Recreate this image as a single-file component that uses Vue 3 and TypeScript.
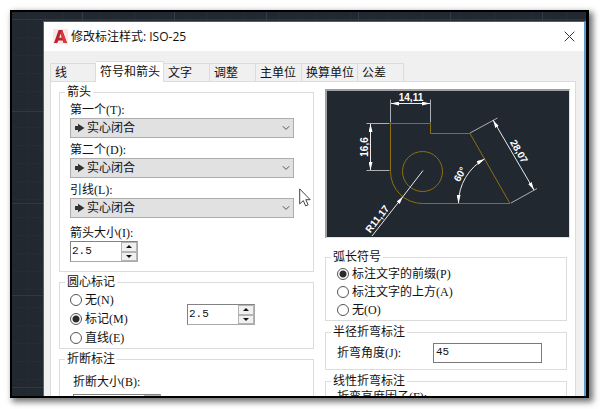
<script setup lang="ts">
import { ref } from 'vue'

interface Choice {
  id: string
  text: string
  key: string
}

const tabs = ['线', '符号和箭头', '文字', '调整', '主单位', '换算单位', '公差']
const activeTab = ref(1)

const arrowFields: Choice[] = [
  { id: 'first', text: '第一个', key: '(T):' },
  { id: 'second', text: '第二个', key: '(D):' },
  { id: 'leader', text: '引线', key: '(L):' },
]
const arrowHeads = ref(['实心闭合', '实心闭合', '实心闭合'])

const centerMarks: Choice[] = [
  { id: 'none', text: '无', key: '(N)' },
  { id: 'mark', text: '标记', key: '(M)' },
  { id: 'line', text: '直线', key: '(E)' },
]
const centerMark = ref('mark')

const arcSymbols: Choice[] = [
  { id: 'before', text: '标注文字的前缀', key: '(P)' },
  { id: 'above', text: '标注文字的上方', key: '(A)' },
  { id: 'off', text: '无', key: '(O)' },
]
const arcSymbol = ref('before')

const arrowSize = ref('2.5')
const markSize = ref('2.5')
const breakSize = ref('')
const jogAngle = ref('45')
</script>

<template>
  <div class="screen">
    <div class="desktop">
      <section class="dialog">
        <header class="titlebar">
          <svg class="logo" viewBox="0 0 15 15" aria-hidden="true">
            <rect width="15" height="15" fill="#f8e9e4" />
            <path d="M1 14 5.6 1h3.6L14 14h-3.4l-1-2.6H5.4L4.2 14z" fill="#b9242c" />
            <path d="M6.2 8.8h2.6L7.6 4.6z" fill="#f8e9e4" />
            <path d="M9.2 1 14 14h-3.4L7.6 4.6z" fill="#d93a3f" />
          </svg>
          <h1>修改标注样式: ISO-25</h1>
          <button class="close" type="button" aria-label="关闭">
            <svg viewBox="0 0 11 11"><path d="M.7.7l9.6 9.6M10.3.7.7 10.3" /></svg>
          </button>
        </header>

        <div class="body">
          <nav class="tabs">
            <button
              v-for="(tab, i) in tabs"
              :key="tab"
              type="button"
              class="tab"
              :class="{ active: i === activeTab }"
              @click="activeTab = i"
            >{{ tab }}</button>
          </nav>

          <div class="page">
            <div class="column">
              <fieldset>
                <legend>箭头</legend>
                <div class="arrows">
                  <div v-for="(f, i) in arrowFields" :key="f.id" class="field">
                    <label :for="f.id">{{ f.text }}<span class="key">{{ f.key }}</span></label>
                    <div class="combo">
                      <select :id="f.id" v-model="arrowHeads[i]">
                        <option>实心闭合</option>
                      </select>
                      <svg class="head" viewBox="0 0 12 10"><path d="M1 3h3V0.8L10.5 5 4 9.2V7H1z" /></svg>
                      <svg class="chevron" viewBox="0 0 8 6"><path d="M.8 1.2 4 4.4l3.2-3.2" /></svg>
                    </div>
                  </div>
                  <div class="field size">
                    <label for="arrow-size">箭头大小<span class="key">(I):</span></label>
                    <div class="spin">
                      <input id="arrow-size" v-model="arrowSize" type="text" />
                      <div class="steps">
                        <button type="button" aria-label="+"><i class="up"></i></button>
                        <button type="button" aria-label="-"><i class="down"></i></button>
                      </div>
                    </div>
                  </div>
                </div>
              </fieldset>

              <fieldset>
                <legend>圆心标记</legend>
                <div class="marks">
                  <div class="radios">
                    <label v-for="c in centerMarks" :key="c.id" class="radio">
                      <input v-model="centerMark" type="radio" name="center" :value="c.id" />
                      <span>{{ c.text }}<span class="key">{{ c.key }}</span></span>
                    </label>
                  </div>
                  <div class="spin">
                    <input v-model="markSize" type="text" aria-label="圆心标记" />
                    <div class="steps">
                      <button type="button" aria-label="+"><i class="up"></i></button>
                      <button type="button" aria-label="-"><i class="down"></i></button>
                    </div>
                  </div>
                </div>
              </fieldset>

              <fieldset>
                <legend>折断标注</legend>
                <div class="breaks">
                  <label for="break-size">折断大小<span class="key">(B):</span></label>
                  <div class="spin wide">
                    <input id="break-size" v-model="breakSize" type="text" />
                    <div class="steps">
                      <button type="button" aria-label="+"><i class="up"></i></button>
                      <button type="button" aria-label="-"><i class="down"></i></button>
                    </div>
                  </div>
                </div>
              </fieldset>
            </div>

            <div class="column right">
              <div class="preview">
                <svg viewBox="328 91 242 146">
                  <defs>
                    <marker id="tip" viewBox="0 0 8 4" refX="8" refY="2" markerWidth="8" markerHeight="4" markerUnits="userSpaceOnUse" orient="auto-start-reverse">
                      <path d="M8 2 0 0v4z" fill="#fff" />
                    </marker>
                  </defs>
                  <g class="part">
                    <path d="M391.500 171.500v-48h40v10h39.500l40 70h-87.500a32 32 0 0 1-32-32z" />
                    <circle cx="423.500" cy="171.500" r="20" />
                  </g>
                  <g class="ext">
                    <path d="M391.500 99.500v23M431.500 99.500v23M367.500 123.500h23M367.500 170.500h23M471 133l27.500-15M512 203l26-14.500" />
                  </g>
                  <g class="dim">
                    <path d="M392 103.500h39" marker-start="url(#tip)" marker-end="url(#tip)" />
                    <path d="M371.500 124v46" marker-start="url(#tip)" marker-end="url(#tip)" />
                    <path d="M494 120l41 70" marker-start="url(#tip)" marker-end="url(#tip)" />
                    <path d="M459.500 203a51 51 0 0 1 26-44" marker-start="url(#tip)" marker-end="url(#tip)" />
                    <path d="M373 236l31-39.500" marker-end="url(#tip)" />
                    <path d="M404 196.500l20-26" />
                  </g>
                  <g class="value">
                    <text x="412" y="101">14,11</text>
                    <text transform="translate(369 147) rotate(-90)">16,6</text>
                    <text transform="translate(517 153) rotate(60)">28,07</text>
                    <text transform="translate(464 176) rotate(-60)">60°</text>
                    <text transform="translate(381 221) rotate(-52)">R11,17</text>
                  </g>
                </svg>
              </div>

              <fieldset>
                <legend>弧长符号</legend>
                <div class="arc">
                  <label v-for="c in arcSymbols" :key="c.id" class="radio">
                    <input v-model="arcSymbol" type="radio" name="arc" :value="c.id" />
                    <span>{{ c.text }}<span class="key">{{ c.key }}</span></span>
                  </label>
                </div>
              </fieldset>

              <fieldset>
                <legend>半径折弯标注</legend>
                <div class="jog">
                  <label for="jog-angle">折弯角度<span class="key">(J):</span></label>
                  <input id="jog-angle" v-model="jogAngle" class="box" type="text" />
                </div>
              </fieldset>

              <fieldset>
                <legend>线性折弯标注</legend>
                <div class="linear">
                  <span>折弯高度因子<span class="key">(F):</span></span>
                </div>
              </fieldset>
            </div>
          </div>
        </div>

        <svg class="pointer" viewBox="0 0 12 19" aria-hidden="true">
          <path d="M.7.9v15l3.600-3.300 2.300 5.300 2.500-1.100-2.300-5.100h4.400z" />
        </svg>
      </section>
    </div>
  </div>
</template>

<style>
body {
  margin: 0;
  background: #fff;
  overflow: hidden;
}
</style>

<style scoped>
.screen {
  box-sizing: border-box;
  height: 100vh;
  padding: 10px 11px 11px 10px;
  font: 12px/16px 'Liberation Sans', 'Noto Sans CJK SC', sans-serif;
  color: #111;
}
.desktop {
  box-sizing: border-box;
  height: 100%;
  overflow: hidden;
  border: solid #000;
  border-width: 2px 3px 2px 2px;
  padding: 9px 0 0 31px;
  box-shadow: 3px 3px 6px 1px rgba(0, 0, 0, 0.55);
  background-color: #212830;
  background-image:
    repeating-linear-gradient(90deg, transparent 0 70px, #343d47 70px 71px, transparent 71px 92px),
    repeating-linear-gradient(180deg, transparent 0 7px, #303943 7px 8px, transparent 8px 92px),
    repeating-linear-gradient(90deg, transparent 0 15px, #242c35 15px 16px, transparent 16px 18px),
    repeating-linear-gradient(180deg, transparent 0 7px, #242c35 7px 8px, transparent 8px 18px);
}
.dialog {
  position: relative;
  border: solid #2070b4;
  border-width: 1px 2px 0 1px;
  border-right-color: #5b9bd0;
  background: #f0f0f0;
}
.titlebar {
  display: flex;
  align-items: center;
  height: 29px;
  padding: 0 9px;
  background: #fff;
}
.logo {
  width: 15px;
  height: 15px;
}
h1 {
  flex: 1;
  margin: 0 0 0 3px;
  font: 12px/16px 'Open Sans', 'Noto Sans CJK SC', sans-serif;
}
.close {
  display: flex;
  padding: 0;
  border: 0;
  background: none;
}
.close svg {
  width: 11px;
  height: 11px;
  fill: none;
  stroke: #333;
}
.body {
  padding: 10px 8px 0 6px;
}
.tabs {
  display: flex;
  align-items: flex-end;
}
.tab {
  box-sizing: border-box;
  min-width: 46px;
  height: 18px;
  padding: 0 3px 0 4px;
  border: 1px solid #dcdcdc;
  border-width: 1px 1px 0 0;
  background: #f0f0f0;
  font: inherit;
  line-height: 16px;
  color: inherit;
  text-align: left;
}
.tab:first-child {
  border-left-width: 1px;
}
.tab.active {
  position: relative;
  height: 21px;
  margin-bottom: -1px;
  background: #fff;
}
.page {
  display: grid;
  grid-template-columns: 255fr 245fr;
  column-gap: 11px;
  padding: 2px 5px 9px 8px;
  border: 1px solid #dcdcdc;
  background: #fff;
}
.column {
  display: flex;
  flex-direction: column;
  gap: 2px;
  min-width: 0;
}
.column.right {
  gap: 3px;
}
fieldset {
  min-width: 0;
  margin: 0;
  padding: 0;
  border: 1px solid #dcdcdc;
}
.right fieldset {
  margin-right: 3px;
}
legend {
  margin-left: 5px;
  padding: 0 2px;
}
label {
  display: block;
}
.key {
  font: 12px/12px 'Liberation Serif', serif;
}
.arrows {
  display: grid;
  gap: 4px;
  padding: 2px 19px 9px 10px;
}
.size {
  padding-top: 3px;
}
.combo {
  display: grid;
  grid-template-columns: 16px 1fr 16px;
  align-items: center;
}
.combo > * {
  grid-row: 1;
}
select {
  grid-column: 1 / -1;
  box-sizing: border-box;
  height: 20px;
  padding: 0 16px;
  border: 1px solid #adadad;
  border-radius: 0;
  background: #e1e1e1;
  appearance: none;
  font: inherit;
  color: inherit;
}
.head {
  grid-column: 1;
  justify-self: end;
  width: 12px;
  height: 10px;
  fill: #333;
  pointer-events: none;
}
.chevron {
  grid-column: 3;
  justify-self: center;
  width: 8px;
  height: 6px;
  fill: none;
  stroke: #555;
  pointer-events: none;
}
input {
  box-sizing: border-box;
  min-width: 0;
  margin: 0;
  font: 11px/14px 'Liberation Mono', monospace;
  color: inherit;
}
.spin {
  box-sizing: border-box;
  display: flex;
  width: 68px;
  height: 21px;
  border: 1px solid #a8a8a8;
  border-top-color: #828282;
  border-left-color: #828282;
}
.spin.wide {
  width: 88px;
}
.spin input {
  flex: 1;
  padding: 0 1px 2px;
  border: 0;
  background: #fff;
}
.steps {
  display: grid;
  width: 16px;
  background: #e4e4e4;
}
.steps button {
  display: flex;
  align-items: center;
  justify-content: center;
  min-height: 0;
  padding: 0;
  border: 1px solid #b4b4b4;
  background: #f0f0f0;
}
.up,
.down {
  border: solid transparent;
  border-width: 0 3px;
}
.up {
  border-bottom: 3px solid #111;
}
.down {
  border-top: 3px solid #111;
}
.marks {
  display: grid;
  grid-template-columns: 117px auto;
  justify-content: start;
  padding: 2px 10px;
}
.marks .spin {
  margin-top: 12px;
}
.radios {
  display: grid;
  gap: 3px;
}
.radio {
  display: flex;
  align-items: center;
  gap: 3px;
}
.radio input {
  width: 12px;
  height: 12px;
  border: 1px solid #555;
  border-radius: 50%;
  background: #fff;
  appearance: none;
}
.radio input:checked {
  background: radial-gradient(circle, #2b2b2b 3px, #fff 4px);
}
.breaks {
  display: grid;
  gap: 4px;
  padding: 7px 13px;
}
.preview {
  margin: 5px 0 8px;
  border: solid #a0a0a0;
  border-width: 2px 1px 1px 2px;
  border-right-color: #e3e3e3;
  border-bottom-color: #e3e3e3;
  background: #212830;
}
.preview svg {
  display: block;
  width: 100%;
}
.part {
  fill: none;
  stroke: #8f7010;
}
.ext {
  fill: none;
  stroke: #aab0b6;
}
.dim {
  fill: none;
  stroke: #e8eaec;
}
.value {
  fill: #fff;
  font: bold 10px 'Liberation Sans', sans-serif;
  text-anchor: middle;
}
.arc {
  display: grid;
  gap: 2px;
  padding: 1px 11px 2px;
}
.jog {
  display: grid;
  grid-template-columns: 96px 109px;
  align-items: center;
  padding: 3px 11px 6px;
}
.box {
  height: 20px;
  padding: 0 2px 2px;
  border: 1px solid #7a7a7a;
}
.linear {
  padding: 0 11px 20px;
}
.pointer {
  position: absolute;
  left: 255px;
  top: 166px;
  width: 12px;
  height: 19px;
  fill: #fff;
  stroke: #444;
}
</style>
